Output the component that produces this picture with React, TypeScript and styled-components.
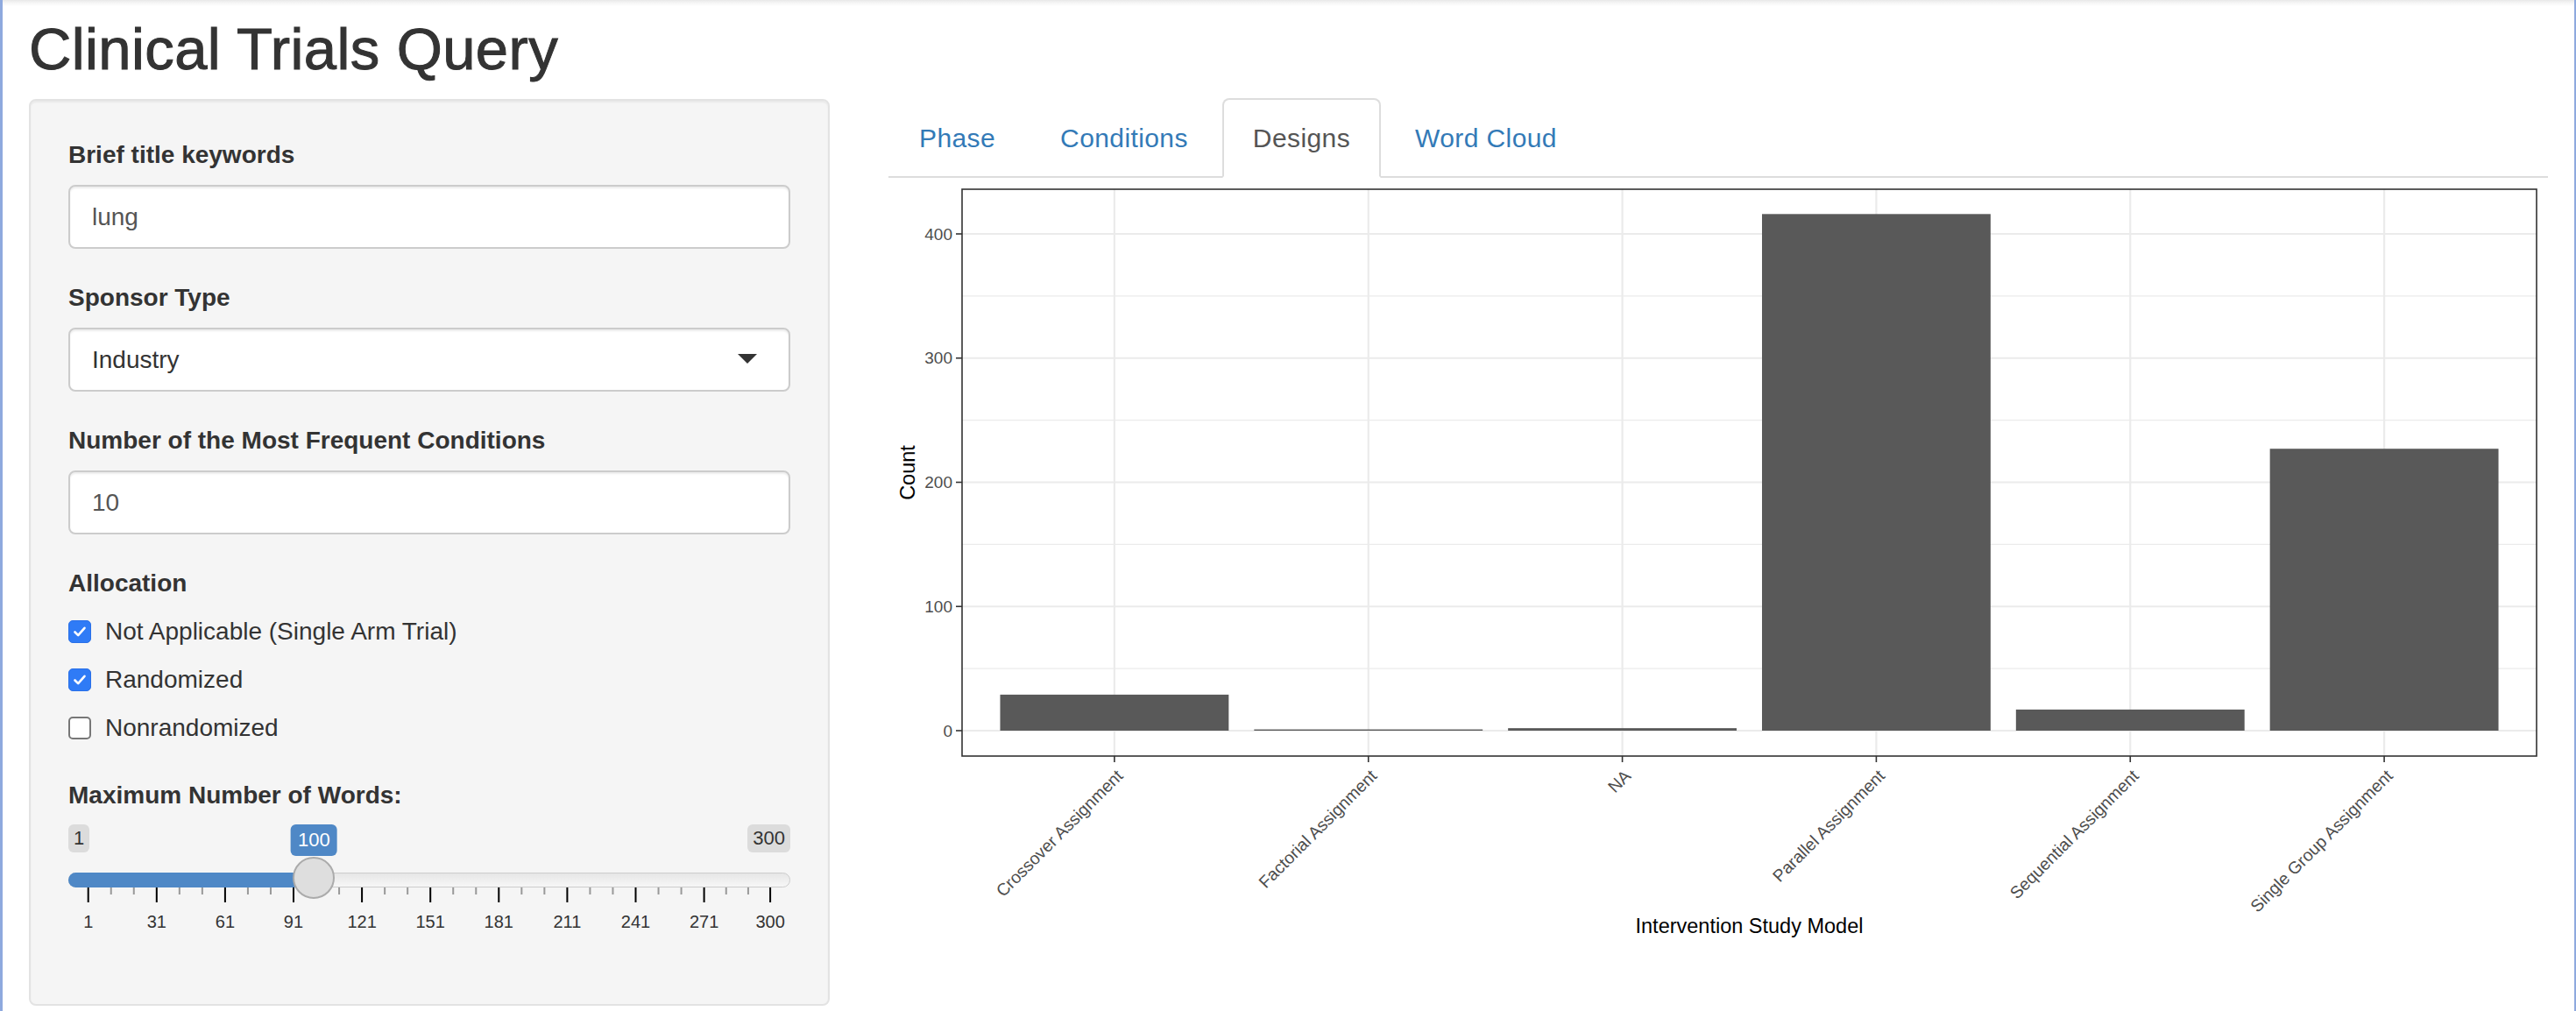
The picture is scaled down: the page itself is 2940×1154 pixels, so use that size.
import React from "react";
import styled, { createGlobalStyle } from "styled-components";

const FONT = `"Liberation Sans", Arial, Helvetica, sans-serif`;

const GlobalStyle = createGlobalStyle`
  html, body { margin: 0; padding: 0; background: #ffffff; }
  body { font-family: ${FONT}; color: #333333; }
  *, *::before, *::after { box-sizing: border-box; }
`;

const Page = styled.div`
  display: flex;
  flex-direction: column;
  width: 2940px;
  height: 1154px;
  overflow: hidden;
  padding: 0 31px 0 30px;
  border-left: 3px solid #8ea9de;
  border-right: 2px solid #8ea9de;
  background: linear-gradient(to bottom, #e8e8e8 0px, #f5f5f5 3px, #ffffff 7px);
`;

const Title = styled.h2`
  margin: 19px 0 19px;
  font-size: 67px;
  line-height: 74px;
  font-weight: 400;
  letter-spacing: 0.4px;
  color: #333333;
  -webkit-text-stroke: 1px #333333;
`;

const Columns = styled.div`
  display: flex;
  align-items: flex-start;
  gap: 67px;
`;

const Well = styled.aside`
  flex: 0 0 913px;
  margin-top: 1px;
  padding: 42px 43px 43px;
  background: #f5f5f5;
  border: 2px solid #e3e3e3;
  border-radius: 8px;
  box-shadow: inset 0 2px 2px rgba(0, 0, 0, 0.05);
`;

const FormGroup = styled.div<{ $mb?: number }>`
  margin-bottom: ${(p) => p.$mb ?? 36}px;
`;

const ControlLabel = styled.div`
  display: block;
  font-size: 28px;
  line-height: 40px;
  font-weight: 700;
  color: #333333;
  margin-bottom: 14px;
`;

const TextInput = styled.input`
  display: block;
  width: 100%;
  height: 73px;
  padding: 0 25px;
  font-family: ${FONT};
  font-size: 28px;
  color: #555555;
  background: #ffffff;
  border: 2px solid #cccccc;
  border-radius: 8px;
  box-shadow: inset 0 2px 2px rgba(0, 0, 0, 0.075);
  outline: none;
`;

const SelectBox = styled.div`
  display: flex;
  align-items: center;
  justify-content: space-between;
  height: 73px;
  padding: 0 36px 0 25px;
  font-size: 28px;
  color: #333333;
  background: #ffffff;
  border: 2px solid #cccccc;
  border-radius: 8px;
  box-shadow: inset 0 2px 2px rgba(0, 0, 0, 0.075);
`;

const Caret = styled.span`
  width: 0;
  height: 0;
  margin-top: -3px;
  border-left: 11px solid transparent;
  border-right: 11px solid transparent;
  border-top: 11px solid #333333;
`;

const CheckList = styled.div`
  display: flex;
  flex-direction: column;
  gap: 15px;
  padding-top: 1px;
`;

const CheckRow = styled.label`
  display: flex;
  align-items: center;
  gap: 16px;
  height: 40px;
  font-size: 28px;
  line-height: 40px;
  color: #333333;
`;

const CheckBox = styled.span<{ $checked: boolean }>`
  flex: 0 0 26px;
  width: 26px;
  height: 26px;
  border-radius: 5px;
  display: inline-flex;
  align-items: center;
  justify-content: center;
  ${(p) =>
    p.$checked
      ? `background: #2f7bf6; border: 1px solid #2a70e8;`
      : `background: #ffffff; border: 2px solid #777777;`}
`;

/* slider */
const GRID_X0 = 22.7;
const GRID_STEP = 2.6033;
const valueX = (v: number) => GRID_X0 + (v - 1) * GRID_STEP;

const SliderWrap = styled.div`
  width: 100%;
`;

const SliderLabels = styled.div`
  position: relative;
  display: flex;
  justify-content: space-between;
  align-items: flex-start;
  height: 55px;
  margin-top: -1px;
`;

const EdgeTag = styled.span`
  height: 32px;
  padding: 0 6px;
  border-radius: 6px;
  background: rgba(0, 0, 0, 0.1);
  font-size: 22px;
  line-height: 32px;
  color: #333333;
`;

const ValueTag = styled.span`
  position: absolute;
  top: 0;
  transform: translateX(-50%);
  height: 36px;
  padding: 0 8px;
  border-radius: 6px;
  background: #4f88c6;
  font-size: 22px;
  line-height: 36px;
  color: #ffffff;
`;

const Track = styled.div`
  position: relative;
  height: 17px;
  border: 1px solid #cccccc;
  border-radius: 9px;
  background: linear-gradient(to bottom, #dedede -50%, #ffffff 150%);
`;

const TrackFill = styled.div`
  position: absolute;
  left: -1px;
  top: -1px;
  bottom: -1px;
  background: #4f88c6;
  border-radius: 9px 0 0 9px;
`;

const Handle = styled.div`
  position: absolute;
  top: -19px;
  width: 48px;
  height: 48px;
  margin-left: -24px;
  border-radius: 50%;
  background: #dedede;
  border: 2px solid #ababab;
`;

const GridSvg = styled.svg`
  display: block;
`;

const Slider: React.FC<{ min: number; max: number; value: number }> = ({ min, max, value }) => {
  const majors = [1, 31, 61, 91, 121, 151, 181, 211, 241, 271, 300];
  const minors: number[] = [];
  for (let i = 0; i < majors.length - 1; i++) {
    const a = majors[i];
    const b = majors[i + 1];
    minors.push(a + (b - a) / 3, a + (2 * (b - a)) / 3);
  }
  const vx = valueX(value);
  return (
    <SliderWrap>
      <SliderLabels>
        <EdgeTag>{min}</EdgeTag>
        <ValueTag style={{ left: vx }}>{value}</ValueTag>
        <EdgeTag>{max}</EdgeTag>
      </SliderLabels>
      <Track>
        <TrackFill style={{ width: vx }} />
        <Handle style={{ left: vx - 1 }} />
      </Track>
      <GridSvg width={824} height={54} viewBox="0 0 824 54">
        {minors.map((m, i) => (
          <rect key={`m${i}`} x={valueX(m) - 1} y={0} width={2} height={8} fill="#999999" />
        ))}
        {majors.map((m) => (
          <rect key={`M${m}`} x={valueX(m) - 1} y={0} width={2} height={17} fill="#000000" />
        ))}
        {majors.map((m) => (
          <text
            key={`t${m}`}
            x={valueX(m)}
            y={46}
            textAnchor="middle"
            fontSize={20}
            fontFamily={FONT}
            fill="#333333"
          >
            {m}
          </text>
        ))}
      </GridSvg>
    </SliderWrap>
  );
};

/* main panel */
const Main = styled.main`
  flex: 0 0 1894px;
  display: flex;
  flex-direction: column;
`;

const TabBar = styled.ul`
  display: flex;
  margin: 0;
  padding: 0;
  list-style: none;
  border-bottom: 2px solid #dddddd;
`;

const Tab = styled.li<{ $active?: boolean }>`
  margin: 0 4px -2px 0;
  padding: 22px 33px;
  border: 2px solid transparent;
  border-radius: 8px 8px 0 0;
  font-size: 30px;
  line-height: 43px;
  letter-spacing: 0.4px;
  color: #337ab7;
  cursor: pointer;
  ${(p) =>
    p.$active &&
    `color: #555555; background: #ffffff; border-color: #dddddd #dddddd transparent;`}
`;

const PlotSvg = styled.svg`
  display: block;
`;

const CATS = [
  "Crossover Assignment",
  "Factorial Assignment",
  "NA",
  "Parallel Assignment",
  "Sequential Assignment",
  "Single Group Assignment",
];
const VALS = [29, 1, 2, 416, 17, 227];

const PX0 = 1097;
const PX1 = 2894;
const PY0 = 216;
const PY1 = 863;
const Y0 = 834;
const YK = 1.4175;
const yOf = (v: number) => Y0 - v * YK;
const STEP = (PX1 - PX0) / 6.2;
const xOf = (i: number) => PX0 + STEP * (0.6 + i);

const BarChart: React.FC = () => {
  const barW = STEP * 0.9;
  return (
    <PlotSvg width={1894} height={951} viewBox="1013 203 1894 951">
      <rect x={PX0} y={PY0} width={PX1 - PX0} height={PY1 - PY0} fill="#ffffff" />
      {[50, 150, 250, 350].map((v) => (
        <line key={`mn${v}`} x1={PX0} x2={PX1} y1={yOf(v)} y2={yOf(v)} stroke="#ebebeb" strokeWidth={1.1} />
      ))}
      {[0, 100, 200, 300, 400].map((v) => (
        <line key={`mj${v}`} x1={PX0} x2={PX1} y1={yOf(v)} y2={yOf(v)} stroke="#ebebeb" strokeWidth={2.2} />
      ))}
      {CATS.map((c, i) => (
        <line key={`vx${c}`} x1={xOf(i)} x2={xOf(i)} y1={PY0} y2={PY1} stroke="#ebebeb" strokeWidth={2.2} />
      ))}
      {VALS.map((v, i) => (
        <rect
          key={`b${i}`}
          x={xOf(i) - barW / 2}
          y={yOf(v)}
          width={barW}
          height={Y0 - yOf(v)}
          fill="#595959"
        />
      ))}
      <rect
        x={PX0}
        y={PY0}
        width={PX1 - PX0}
        height={PY1 - PY0}
        fill="none"
        stroke="#333333"
        strokeWidth={1.6}
      />
      {[0, 100, 200, 300, 400].map((v) => (
        <g key={`yt${v}`}>
          <line x1={PX0 - 7} x2={PX0} y1={yOf(v)} y2={yOf(v)} stroke="#333333" strokeWidth={1.6} />
          <text
            x={PX0 - 11}
            y={yOf(v)}
            dy="0.35em"
            textAnchor="end"
            fontSize={19}
            fontFamily={FONT}
            fill="#4d4d4d"
          >
            {v}
          </text>
        </g>
      ))}
      {CATS.map((c, i) => (
        <g key={`xt${c}`}>
          <line x1={xOf(i)} x2={xOf(i)} y1={PY1} y2={PY1 + 7} stroke="#333333" strokeWidth={1.6} />
          <text
            transform={`translate(${xOf(i) + 1}, 877) rotate(-45)`}
            dy="0.72em"
            textAnchor="end"
            fontSize={19.5}
            fontFamily={FONT}
            fill="#4d4d4d"
          >
            {c}
          </text>
        </g>
      ))}
      <text
        transform="translate(1035, 539.5) rotate(-90)"
        dy="0.35em"
        textAnchor="middle"
        fontSize={23.5}
        fontFamily={FONT}
        fill="#000000"
      >
        Count
      </text>
      <text
        x={(PX0 + PX1) / 2}
        y={1065}
        textAnchor="middle"
        fontSize={23.5}
        fontFamily={FONT}
        fill="#000000"
      >
        Intervention Study Model
      </text>
    </PlotSvg>
  );
};

const CheckIcon: React.FC = () => (
  <svg width="18" height="18" viewBox="0 0 18 18">
    <path
      d="M3.5 9.5 L7.2 13.2 L14.5 4.8"
      fill="none"
      stroke="#ffffff"
      strokeWidth="2.6"
      strokeLinecap="round"
      strokeLinejoin="round"
    />
  </svg>
);

const allocation = [
  { label: "Not Applicable (Single Arm Trial)", checked: true },
  { label: "Randomized", checked: true },
  { label: "Nonrandomized", checked: false },
];

const tabs = ["Phase", "Conditions", "Designs", "Word Cloud"];

export default function App() {
  return (
    <>
      <GlobalStyle />
      <Page>
        <Title>Clinical Trials Query</Title>
        <Columns>
          <Well>
            <FormGroup>
              <ControlLabel>Brief title keywords</ControlLabel>
              <TextInput defaultValue="lung" readOnly />
            </FormGroup>
            <FormGroup>
              <ControlLabel>Sponsor Type</ControlLabel>
              <SelectBox>
                <span>Industry</span>
                <Caret />
              </SelectBox>
            </FormGroup>
            <FormGroup>
              <ControlLabel>Number of the Most Frequent Conditions</ControlLabel>
              <TextInput defaultValue="10" readOnly />
            </FormGroup>
            <FormGroup $mb={37}>
              <ControlLabel>Allocation</ControlLabel>
              <CheckList>
                {allocation.map((a) => (
                  <CheckRow key={a.label}>
                    <CheckBox $checked={a.checked}>{a.checked && <CheckIcon />}</CheckBox>
                    <span>{a.label}</span>
                  </CheckRow>
                ))}
              </CheckList>
            </FormGroup>
            <FormGroup>
              <ControlLabel>Maximum Number of Words:</ControlLabel>
              <Slider min={1} max={300} value={100} />
            </FormGroup>
          </Well>
          <Main>
            <TabBar>
              {tabs.map((t) => (
                <Tab key={t} $active={t === "Designs"}>
                  {t}
                </Tab>
              ))}
            </TabBar>
            <BarChart />
          </Main>
        </Columns>
      </Page>
    </>
  );
}
